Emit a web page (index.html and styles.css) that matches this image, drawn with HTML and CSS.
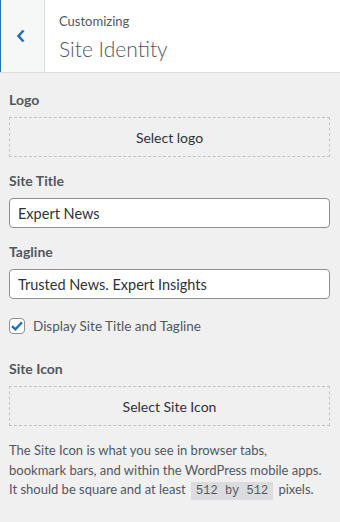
FILE: index.html
```html
<!DOCTYPE html>
<html lang="en">
<head>
    <meta charset="UTF-8">
    <meta name="viewport" content="width=device-width, initial-scale=1.0">
    <title>Site Identity</title>
    <link rel="stylesheet" href="styles.css">
</head>
<body>
    <div class="panel-header">
        <button class="back-button" aria-label="Back">
            <svg width="10" height="14" viewBox="0 0 10 14"><path d="M7.5 1.5 L2.5 7 L7.5 12.5" fill="none" stroke="#2271b1" stroke-width="2.6"/></svg>
        </button>
        <div class="panel-title">
            <span class="panel-sub">Customizing</span>
            <h3>Site Identity</h3>
        </div>
    </div>

    <div class="controls">
        <div class="control">
            <span class="control-label">Logo</span>
            <button class="upload-button">Select logo</button>
        </div>
        <div class="control">
            <label class="control-label" for="blogname">Site Title</label>
            <input type="text" id="blogname" value="Expert News">
        </div>
        <div class="control">
            <label class="control-label" for="blogdescription">Tagline</label>
            <input type="text" id="blogdescription" value="Trusted News. Expert Insights">
        </div>
        <div class="control checkbox-control">
            <label><span class="check"><svg width="14" height="12" viewBox="0 0 14 12"><path d="M2 6.2 L5.4 9.4 L12 2.2" fill="none" stroke="#2271b1" stroke-width="2.4"/></svg></span>Display Site Title and Tagline</label>
        </div>
        <div class="control">
            <span class="control-label">Site Icon</span>
            <button class="upload-button">Select Site Icon</button>
            <p class="description">The Site Icon is what you see in browser tabs,<br>bookmark bars, and within the WordPress mobile apps.<br>It should be square and at least <code>512 by 512</code> pixels.</p>
        </div>
    </div>
</body>
</html>
```

FILE: styles.css
```css
body {
    margin: 0;
    background-color: #f0f0f1;
    font-family: Lato, "Noto Sans", sans-serif;
    font-size: 13px;
    color: #50575e;
}
.panel-header {
    display: flex;
    height: 72px;
    background: white;
    border-bottom: 1px solid #dcdcde;
}
.back-button {
    width: 45px;
    height: 72px;
    padding: 0;
    margin: 0;
    background: #f6f7f7;
    border: none;
    border-left: 1px solid #2271b1;
    border-right: 1px solid #dcdcde;
    display: flex;
    align-items: center;
    justify-content: center;
    cursor: pointer;
}
.back-button svg {
    margin-left: -3px;
}
.panel-title {
    padding: 11px 0 0 14px;
}
.panel-sub {
    display: block;
    font-size: 13px;
    line-height: 20px;
    color: #50575e;
}
.panel-title h3 {
    margin: 5px 0 0 0;
    font-size: 21px;
    font-weight: 300;
    line-height: 26px;
    color: #50575e;
}
.controls {
    padding: 17px 10px 0 9px;
}
.control {
    margin-bottom: 14px;
}
.control-label {
    display: block;
    font-size: 14px;
    font-weight: 700;
    line-height: 20px;
    color: #50575e;
    margin-bottom: 7px;
}
.upload-button {
    display: block;
    width: 100%;
    height: 40px;
    background: transparent;
    border: 1px dashed #c3c4c7;
    font-family: inherit;
    font-size: 14px;
    color: #2c3338;
    cursor: pointer;
}
.control input {
    width: 100%;
    height: 30px;
    box-sizing: border-box;
    border: 1px solid #8c8f94;
    border-radius: 4px;
    padding: 0 8px;
    font-family: inherit;
    font-size: 14.5px;
    color: #2c3338;
    background: white;
}
.checkbox-control {
    margin-top: 17px;
    margin-bottom: 23px;
}
.checkbox-control label {
    display: flex;
    align-items: center;
    height: 20px;
    font-size: 13.5px;
    color: #50575e;
}
.check {
    width: 16px;
    height: 16px;
    box-sizing: border-box;
    border: 1px solid #8c8f94;
    border-radius: 4px;
    background: white;
    margin-right: 8px;
    display: flex;
    align-items: center;
    justify-content: center;
}
.description {
    margin: 15px -10px 0 0;
    font-size: 13px;
    line-height: 19.5px;
    color: #50575e;
    white-space: nowrap;
}
code {
    font-family: "Liberation Mono", monospace;
    font-size: 12px;
    line-height: 16px;
    background: #dcdcde;
    padding: 2px 5px;
    margin: 0 2px;
}
```
